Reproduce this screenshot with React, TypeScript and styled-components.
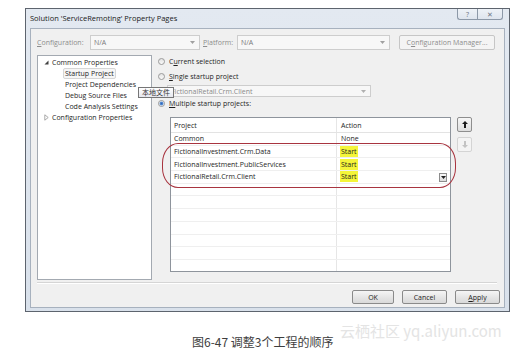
import React from "react";
import styled, { createGlobalStyle } from "styled-components";

const Global = createGlobalStyle`
  html, body { margin: 0; padding: 0; background: #ffffff; }
  body {
    width: 522px; height: 351px; overflow: hidden;
    font-family: "Open Sans", "Noto Sans", "Noto Sans CJK SC", sans-serif;
    color: #1e1e1e;
  }
  u { text-decoration-thickness: 1px; text-underline-offset: 1px; }
`;

const Page = styled.div`
  position: relative;
  width: 522px;
  height: 351px;
  box-sizing: border-box;
  padding: 8px 0 0 25px;
  display: flex;
  flex-direction: column;
  align-items: flex-start;
`;

const Window = styled.div`
  width: 485px;
  height: 304px;
  box-sizing: border-box;
  border: 1px solid #5d646e;
  background: linear-gradient(180deg, #e3e9f1 0%, #d9e1eb 100%);
  display: flex;
  flex-direction: column;
  padding: 0 4px 3px 4px;
`;

const TitleBar = styled.div`
  height: 19px;
  display: flex;
  align-items: flex-start;
`;

const TitleText = styled.div`
  font-size: 7.5px;
  line-height: 19px;
  color: #1a1a1a;
`;

const CaptionButtons = styled.div`
  margin-left: auto;
  margin-right: 2px;
  display: flex;
`;

const CaptionButton = styled.div<{ $w: number }>`
  width: ${(p) => p.$w}px;
  height: 11px;
  box-sizing: border-box;
  border: 1px solid #8d99a8;
  border-top: none;
  background: linear-gradient(180deg, #eef2f7 0%, #dfe5ee 100%);
  display: flex;
  align-items: center;
  justify-content: center;
  font-size: 7px;
  color: #6d7683;
  &:first-child { border-bottom-left-radius: 3px; border-right: none; }
  &:last-child { border-bottom-right-radius: 3px; }
`;

const Client = styled.div`
  flex: 1;
  box-sizing: border-box;
  background: #f0f0f0;
  border: 1px solid #a7b1be;
  display: flex;
  flex-direction: column;
  padding: 6px 0 0 6px;
`;

const ConfigRow = styled.div`
  height: 15px;
  display: flex;
  align-items: center;
`;

const DimLabel = styled.div<{ $w: number; $pl?: number }>`
  width: ${(p) => p.$w}px;
  box-sizing: border-box;
  padding-left: ${(p) => p.$pl ?? 0}px;
  font-size: 7px;
  color: #8d8d8d;
  white-space: nowrap;
`;

const Combo = styled.div<{ $w: number; $h?: number }>`
  width: ${(p) => p.$w}px;
  height: ${(p) => p.$h ?? 15}px;
  box-sizing: border-box;
  border: 1px solid #cdcdcd;
  background: #f7f7f7;
  display: flex;
  align-items: center;
  padding-left: 3px;
  font-size: 7px;
  color: #7a7a7a;
  white-space: nowrap;
  overflow: hidden;
`;

const ComboArrow = styled.span`
  margin-left: auto;
  margin-right: 4px;
  display: flex;
  align-items: center;
`;

const DimButton = styled.div`
  margin-left: 9px;
  width: 96px;
  height: 15px;
  box-sizing: border-box;
  border: 1px solid #c6c6c6;
  border-radius: 2px;
  background: #f4f4f4;
  display: flex;
  align-items: center;
  justify-content: center;
  font-size: 7px;
  color: #8d8d8d;
`;

const Body = styled.div`
  position: relative;
  margin-top: 5px;
  height: 225px;
  display: flex;
`;

const Tree = styled.div`
  width: 115px;
  height: 225px;
  box-sizing: border-box;
  border: 1px solid #a3a9b1;
  background: #ffffff;
  padding-top: 1px;
  display: flex;
  flex-direction: column;
`;

const TreeRow = styled.div<{ $indent: number }>`
  height: 11px;
  display: flex;
  align-items: center;
  padding-left: ${(p) => p.$indent}px;
  font-size: 7px;
  white-space: nowrap;
`;

const Toggle = styled.span`
  width: 8px;
  display: flex;
  align-items: center;
`;

const TreeLabel = styled.span<{ $selected?: boolean }>`
  padding: 0 1px;
  line-height: 9px;
  border: 1px solid ${(p) => (p.$selected ? "#d6d6d6" : "transparent")};
  border-radius: 2px;
  background: ${(p) => (p.$selected ? "#f6f6f6" : "transparent")};
  margin-left: -2px;
`;

const Tooltip = styled.div`
  position: absolute;
  left: 101px;
  top: 32px;
  width: 36px;
  height: 11px;
  box-sizing: border-box;
  border: 1px solid #767676;
  background: linear-gradient(180deg, #ffffff 0%, #e6e7ee 100%);
  font-family: "Noto Sans CJK SC", sans-serif;
  font-size: 7px;
  line-height: 9px;
  text-align: center;
  color: #333;
  z-index: 3;
`;

const RightPanel = styled.div`
  margin-left: 6px;
  display: flex;
  flex-direction: column;
`;

const RadioRow = styled.div<{ $mt: number }>`
  margin-top: ${(p) => p.$mt}px;
  height: 11px;
  display: flex;
  align-items: center;
  font-size: 7px;
  white-space: nowrap;
`;

const Radio = styled.span<{ $on?: boolean }>`
  width: 7px;
  height: 7px;
  box-sizing: border-box;
  border-radius: 50%;
  border: 1px solid #9a9a9a;
  background: ${(p) =>
    p.$on
      ? "radial-gradient(circle, #2f66b8 0, #5e92d6 1.6px, #eef2f7 2.3px)"
      : "linear-gradient(180deg, #e3e3e3, #f9f9f9)"};
  margin-right: 4px;
`;

const SubCombo = styled(Combo)`
  margin-top: 3px;
  margin-left: 9px;
  padding-left: 3px;
  color: #8a8a8a;
`;

const GridArea = styled.div`
  position: relative;
  margin-top: 8px;
  margin-left: 12px;
  display: flex;
  align-items: flex-start;
`;

const Grid = styled.div`
  width: 281px;
  height: 155px;
  box-sizing: border-box;
  border: 1px solid #8e949c;
  background: #ffffff;
  overflow: hidden;
  display: flex;
  flex-direction: column;
`;

const GridRow = styled.div<{ $header?: boolean }>`
  flex: none;
  height: ${(p) => (p.$header ? 15 : 12.7)}px;
  display: grid;
  grid-template-columns: 166px 1fr;
  border-bottom: 1px solid ${(p) => (p.$header ? "#e3e3e3" : "#efefef")};
  box-sizing: border-box;
  font-size: 7px;
`;

const Cell = styled.div<{ $first?: boolean }>`
  position: relative;
  display: flex;
  align-items: center;
  padding-left: ${(p) => (p.$first ? 3 : 4)}px;
  border-right: ${(p) => (p.$first ? "1px solid #e6e6e6" : "none")};
  white-space: nowrap;
`;

const Highlight = styled.span`
  background: #f4f53a;
  padding: 1px 1px;
  margin-left: -1px;
  line-height: 9px;
`;

const CellDrop = styled.span`
  position: absolute;
  right: 3px;
  top: 1.5px;
  width: 8px;
  height: 9px;
  box-sizing: border-box;
  border: 1px solid #8c8c8c;
  background: linear-gradient(180deg, #f8f8f8, #dcdcdc);
  display: flex;
  align-items: center;
  justify-content: center;
`;

const Oval = styled.div`
  position: absolute;
  left: -8px;
  top: 26px;
  width: 294px;
  height: 45px;
  box-sizing: border-box;
  border: 1.5px solid #a8343f;
  border-radius: 16px / 20px;
  pointer-events: none;
`;

const MoveButtons = styled.div`
  margin-left: 6px;
  display: flex;
  flex-direction: column;
  gap: 5px;
`;

const MoveButton = styled.div<{ $disabled?: boolean }>`
  width: 15px;
  height: 15px;
  box-sizing: border-box;
  border: 1px solid ${(p) => (p.$disabled ? "#d4d4d4" : "#8e8e8e")};
  border-radius: 2px;
  background: ${(p) =>
    p.$disabled ? "#f4f4f4" : "linear-gradient(180deg, #f7f7f7, #dedede)"};
  display: flex;
  align-items: center;
  justify-content: center;
`;

const Separator = styled.div`
  margin-top: 2px;
  width: 460px;
  height: 0;
  border-top: 1px solid #d5d5d5;
  border-bottom: 1px solid #ffffff;
`;

const ButtonRow = styled.div`
  margin-top: 6px;
  width: 463px;
  display: flex;
  justify-content: flex-end;
  gap: 8px;
`;

const DialogButton = styled.div<{ $w: number }>`
  width: ${(p) => p.$w}px;
  height: 14px;
  box-sizing: border-box;
  border: 1px solid #8a8a8a;
  border-radius: 2px;
  background: linear-gradient(180deg, #f5f5f5 0%, #e6e6e6 50%, #d9d9d9 100%);
  display: flex;
  align-items: center;
  justify-content: center;
  font-size: 7px;
  color: #1e1e1e;
`;

const Caption = styled.div`
  margin-top: 23px;
  margin-left: 167px;
  font-family: "Noto Sans CJK SC", sans-serif;
  font-size: 12px;
  line-height: 14px;
  color: #3d3d3d;
  white-space: nowrap;
`;

const Watermark = styled.div`
  position: absolute;
  left: 340px;
  top: 322px;
  font-family: "Noto Sans CJK SC", sans-serif;
  font-size: 15px;
  line-height: 18px;
  color: #e4e4e4;
  white-space: nowrap;
`;

const DownTri = ({ color = "#8a8a8a" }: { color?: string }) => (
  <svg width="5" height="3" viewBox="0 0 5 3">
    <path d="M0 0 H5 L2.5 3 Z" fill={color} />
  </svg>
);

const ExpandedTri = () => (
  <svg width="5" height="5" viewBox="0 0 5 5">
    <path d="M4.5 0.5 V4.5 H0.5 Z" fill="#404040" />
  </svg>
);

const CollapsedTri = () => (
  <svg width="5" height="7" viewBox="0 0 5 7">
    <path d="M0.8 0.8 L4.2 3.5 L0.8 6.2 Z" fill="none" stroke="#a0a0a0" strokeWidth="0.9" />
  </svg>
);

const UpArrow = ({ color }: { color: string }) => (
  <svg width="6" height="7" viewBox="0 0 6 7">
    <path d="M3 0 L6 3 H4 V7 H2 V3 H0 Z" fill={color} />
  </svg>
);

const DownArrow = ({ color }: { color: string }) => (
  <svg width="6" height="7" viewBox="0 0 6 7">
    <path d="M3 7 L6 4 H4 V0 H2 V4 H0 Z" fill={color} />
  </svg>
);

const rows: { project: string; action: string; start?: boolean; drop?: boolean }[] = [
  { project: "Common", action: "None" },
  { project: "FictionalInvestment.Crm.Data", action: "Start", start: true },
  { project: "FictionalInvestment.PublicServices", action: "Start", start: true },
  { project: "FictionalRetail.Crm.Client", action: "Start", start: true, drop: true },
];

export default function App() {
  return (
    <>
      <Global />
      <Page>
        <Window>
          <TitleBar>
            <TitleText>Solution 'ServiceRemoting' Property Pages</TitleText>
            <CaptionButtons>
              <CaptionButton $w={20}>?</CaptionButton>
              <CaptionButton $w={26}>✕</CaptionButton>
            </CaptionButtons>
          </TitleBar>
          <Client>
            <ConfigRow>
              <DimLabel $w={53}>
                <u>C</u>onfiguration:
              </DimLabel>
              <Combo $w={110}>
                N/A
                <ComboArrow>
                  <DownTri color="#a0a0a0" />
                </ComboArrow>
              </Combo>
              <DimLabel $w={37} $pl={3}>
                <u>P</u>latform:
              </DimLabel>
              <Combo $w={153}>
                N/A
                <ComboArrow>
                  <DownTri color="#a0a0a0" />
                </ComboArrow>
              </Combo>
              <DimButton>
                C<u>o</u>nfiguration Manager...
              </DimButton>
            </ConfigRow>
            <Body>
              <Tree>
                <TreeRow $indent={6}>
                  <Toggle>
                    <ExpandedTri />
                  </Toggle>
                  Common Properties
                </TreeRow>
                <TreeRow $indent={27}>
                  <TreeLabel $selected>Startup Project</TreeLabel>
                </TreeRow>
                <TreeRow $indent={27}>Project Dependencies</TreeRow>
                <TreeRow $indent={27}>Debug Source Files</TreeRow>
                <TreeRow $indent={27}>Code Analysis Settings</TreeRow>
                <TreeRow $indent={6}>
                  <Toggle>
                    <CollapsedTri />
                  </Toggle>
                  Configuration Properties
                </TreeRow>
              </Tree>
              <Tooltip>本地文件</Tooltip>
              <RightPanel>
                <RadioRow $mt={1}>
                  <Radio />
                  C<u>u</u>rrent selection
                </RadioRow>
                <RadioRow $mt={4}>
                  <Radio />
                  <u>S</u>ingle startup project
                </RadioRow>
                <SubCombo $w={204} $h={12}>
                  FictionalRetail.Crm.Client
                  <ComboArrow>
                    <DownTri color="#b0b0b0" />
                  </ComboArrow>
                </SubCombo>
                <RadioRow $mt={1}>
                  <Radio $on />
                  <u>M</u>ultiple startup projects:
                </RadioRow>
                <GridArea>
                  <Grid>
                    <GridRow $header>
                      <Cell $first>Project</Cell>
                      <Cell>Action</Cell>
                    </GridRow>
                    {rows.map((r) => (
                      <GridRow key={r.project}>
                        <Cell $first>{r.project}</Cell>
                        <Cell>
                          {r.start ? <Highlight>{r.action}</Highlight> : r.action}
                          {r.drop && (
                            <CellDrop>
                              <DownTri color="#202020" />
                            </CellDrop>
                          )}
                        </Cell>
                      </GridRow>
                    ))}
                    {Array.from({ length: 8 }).map((_, i) => (
                      <GridRow key={"e" + i}>
                        <Cell $first />
                        <Cell />
                      </GridRow>
                    ))}
                  </Grid>
                  <Oval />
                  <MoveButtons>
                    <MoveButton>
                      <UpArrow color="#1a1a1a" />
                    </MoveButton>
                    <MoveButton $disabled>
                      <DownArrow color="#c4c4c4" />
                    </MoveButton>
                  </MoveButtons>
                </GridArea>
              </RightPanel>
            </Body>
            <Separator />
            <ButtonRow>
              <DialogButton $w={42}>OK</DialogButton>
              <DialogButton $w={45}>Cancel</DialogButton>
              <DialogButton $w={45}>
                <u>A</u>pply
              </DialogButton>
            </ButtonRow>
          </Client>
        </Window>
        <Caption>图6-47 调整3个工程的顺序</Caption>
        <Watermark>云栖社区 yq.aliyun.com</Watermark>
      </Page>
    </>
  );
}
